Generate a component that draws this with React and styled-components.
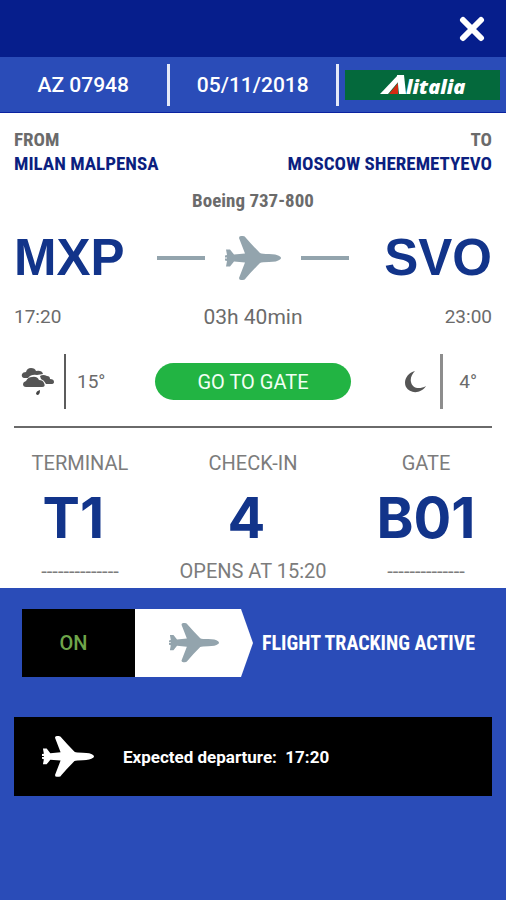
import React, { useState } from 'react'
import styled, { createGlobalStyle } from 'styled-components'

const GlobalStyle = createGlobalStyle`
  * {
    box-sizing: border-box;
  }
  body {
    margin: 0;
    background: #2a4cb8;
    font-family: Roboto, 'Liberation Sans', sans-serif;
    font-size: 20px;
    line-height: 24px;
    color: #6b6b6b;
  }
  button {
    font: inherit;
    border: 0;
    padding: 0;
    cursor: pointer;
  }
  svg {
    display: block;
    flex: none;
  }
`

const narrow = "'Roboto Condensed', 'Liberation Sans Narrow', Roboto, sans-serif"

const TopBar = styled.header`
  display: flex;
  justify-content: flex-end;
  align-items: center;
  height: 57px;
  padding: 0 21px;
  background: #061e8c;
`
const CloseButton = styled.button`
  background: none;
`
const InfoBar = styled.div`
  display: grid;
  grid-template-columns: 1fr 1fr 167px;
  align-items: center;
  height: 56px;
  border-bottom: 1px solid #0a22a0;
  background: #2a4cb8;
`
const InfoCell = styled.div`
  display: flex;
  align-items: center;
  justify-content: center;
  height: 42px;
  padding: 0 6px;
  border-right: ${({ $last }) => ($last ? '0' : '3px solid #e4e9f8')};
  color: #fff;
  font-size: 21px;
  font-weight: 500;
`
const AirlineBadge = styled.div`
  display: flex;
  justify-content: center;
  width: 100%;
  height: 30px;
  background: #04693c;
`
const Card = styled.main`
  padding: 15px 14px 5px;
  background: #fff;
`
const Airports = styled.div`
  display: flex;
  justify-content: space-between;
`
const Airport = styled.div`
  font-family: ${narrow};
  font-size: 19px;
  font-weight: 700;
  text-align: ${({ $end }) => ($end ? 'right' : 'left')};
`
const AirportName = styled.div`
  color: #0c1f80;
`
const Aircraft = styled.div`
  margin-top: 13px;
  font-family: ${narrow};
  font-size: 19px;
  font-weight: 700;
  text-align: center;
`
const SplitRow = styled.div`
  display: grid;
  grid-template-columns: 1fr auto 1fr;
  align-items: center;
  margin-top: ${({ $gap }) => $gap}px;
`
const Code = styled.div`
  font-family: 'Liberation Sans', sans-serif;
  font-size: 51px;
  font-weight: 700;
  line-height: 60px;
  color: #12348a;
  text-align: ${({ $end }) => ($end ? 'right' : 'left')};
`
const Route = styled.div`
  display: flex;
  align-items: center;
  gap: 20px;
`
const RouteLine = styled.span`
  width: 48px;
  height: 4px;
  background: #93a4ad;
`
const Time = styled.div`
  font-size: 19px;
  text-align: ${({ $end }) => ($end ? 'right' : 'left')};
`
const Duration = styled.div`
  font-size: 21px;
`
const Weather = styled.div`
  display: flex;
  align-items: center;
  justify-content: ${({ $end }) => ($end ? 'flex-end' : 'flex-start')};
  padding: ${({ $end }) => ($end ? '0 15px 0 0' : '0 0 0 7px')};
`
const WeatherTemp = styled.span`
  display: flex;
  align-items: center;
  height: 55px;
  margin-left: ${({ $end }) => ($end ? '14px' : '8px')};
  padding-left: ${({ $end }) => ($end ? '16px' : '11px')};
  border-left: ${({ $end }) => ($end ? '3px solid #8d8d8d' : '2px solid #5c5c5c')};
  font-size: 19px;
`
const GateButton = styled.button`
  width: 196px;
  height: 37px;
  border-radius: 19px;
  background: #22b443;
  color: #f2fff4;
`
const Rule = styled.hr`
  height: 2px;
  margin: 17px 0 23px;
  border: 0;
  background: #6a6a6a;
`
const Stats = styled.div`
  display: grid;
  grid-template-columns: 132px 1fr 132px;
  text-align: center;
`
const StatLabel = styled.div`
  color: #7c7c7c;
`
const StatValue = styled.div`
  margin: 13px 0 11px;
  font-family: Inter, 'Liberation Sans', sans-serif;
  font-size: 56px;
  font-weight: 700;
  line-height: 60px;
  color: #12348a;
`
const Tracking = styled.section`
  display: flex;
  align-items: center;
  gap: 9px;
  padding: 21px 22px 0;
`
const TrackSwitch = styled.button`
  display: flex;
  flex: none;
  width: 231px;
  height: 68px;
  background: none;
`
const SwitchState = styled.span`
  display: flex;
  align-items: center;
  justify-content: center;
  width: 113px;
  height: 100%;
  padding-right: 10px;
  background: #000;
  color: #6ea54a;
  font-weight: 500;
`
const SwitchHandle = styled.span`
  display: flex;
  align-items: center;
  flex: 1;
  height: 100%;
  padding-left: 34px;
  background: #fff;
  clip-path: polygon(0 0, 106px 0, 100% 50%, 106px 100%, 0 100%);
`
const TrackLabel = styled.span`
  font-family: ${narrow};
  font-weight: 700;
  color: #fff;
  white-space: nowrap;
`
const Notice = styled.section`
  display: flex;
  align-items: center;
  gap: 29px;
  height: 79px;
  margin: 40px 14px 0;
  padding: 0 28px;
  background: #000;
  color: #fff;
  font-size: 17px;
  font-weight: 700;
  white-space: pre;
`

const Plane = ({ width, color }) => (
  <svg width={width} viewBox='0 0 56 44' fill={color} aria-hidden='true'>
    <path d='M14 2Q14 0 16 0H18Q20 0 21 2Q27 9 35 17Q37 18 44 18Q52 18 55 20.500Q57 22 55 23.500Q52 26 44 26Q37 26 35 27Q27 35 21 42Q20 44 18 44H16Q14 44 14 42L20 26.500L9 25.500L5 30.500H1L2 25L0 24.500V22.500H2V21.500H0V19.500L2 19L1 13.500H5L9 18.500L20 17.500Z' />
  </svg>
)

const CloseIcon = () => (
  <svg width='26' height='26' viewBox='0 0 26 26' aria-hidden='true'>
    <path
      d='M4 4L22 22M22 4L4 22'
      stroke='#fff'
      strokeWidth='6'
      strokeLinecap='round'
    />
  </svg>
)

const CloudIcon = () => (
  <svg width='35' height='30' viewBox='0 0 35 30' aria-hidden='true'>
    <path
      d='M3 11Q0 10 1 7Q2 5 5 5Q6 1 10 1Q14 1 15 4Q21 3 22 7L16 8Q10 7 7 11Z'
      fill='#555'
    />
    <path
      d='M19 9Q22 7 26 9Q29 9 29 12Q33 12 33 15Q33 17 30 17H25Q23 13 20 12Z'
      fill='#555'
    />
    <path
      d='M5 20Q2 20 2 17Q2 15 5 14Q7 10 11 10Q16 9 18 13Q22 13 23 16Q25 20 21 20Z'
      fill='#555'
    />
    <path d='M19 23Q15 24 15 27Q17 29 18 27Q19 26 19 23Z' fill='#444' />
  </svg>
)

const MoonIcon = () => (
  <svg width='21' height='22' viewBox='0 0 21 22' aria-hidden='true'>
    <path d='M10 0C2 2 -2 10 1 16C5 23 16 23 21 15C14 19 7 17 6 11C5 7 7 3 10 0Z' fill='#555' />
  </svg>
)

const AirlineLogo = () => (
  <svg width='90' height='30' viewBox='0 0 90 30' role='img' aria-label='Alitalia'>
    <path d='M2 24L20 5H26L10 24Z' fill='#fff' />
    <path d='M11 24L20 13V24Z' fill='#d22a12' />
    <path d='M19 5H26L28 24H21Z' fill='#fff' />
    <text
      x='28'
      y='24'
      fill='#fff'
      fontFamily='Open Sans, sans-serif'
      fontSize='20'
      fontWeight='800'
      fontStyle='italic'
    >
      litalia
    </text>
  </svg>
)

const stats = [
  { label: 'TERMINAL', value: 'T1\u00a0', note: '--------------' },
  { label: 'CHECK-IN', value: '4\u00a0', note: 'OPENS AT 15:20' },
  { label: 'GATE', value: 'B01', note: '--------------' },
]

const App = () => {
  const [tracking, setTracking] = useState(true)

  return (
    <>
      <GlobalStyle />
      <TopBar>
        <CloseButton aria-label='Close'>
          <CloseIcon />
        </CloseButton>
      </TopBar>
      <InfoBar>
        <InfoCell>AZ 07948</InfoCell>
        <InfoCell>05/11/2018</InfoCell>
        <InfoCell $last>
          <AirlineBadge>
            <AirlineLogo />
          </AirlineBadge>
        </InfoCell>
      </InfoBar>

      <Card>
        <Airports>
          <Airport>
            FROM
            <AirportName>MILAN MALPENSA</AirportName>
          </Airport>
          <Airport $end>
            TO
            <AirportName>MOSCOW SHEREMETYEVO</AirportName>
          </Airport>
        </Airports>
        <Aircraft>Boeing 737-800</Aircraft>
        <SplitRow $gap={15}>
          <Code>MXP</Code>
          <Route>
            <RouteLine />
            <Plane width={56} color='#93a4ad' />
            <RouteLine />
          </Route>
          <Code $end>SVO</Code>
        </SplitRow>
        <SplitRow $gap={17}>
          <Time>17:20</Time>
          <Duration>03h 40min</Duration>
          <Time $end>23:00</Time>
        </SplitRow>
        <SplitRow $gap={25}>
          <Weather>
            <CloudIcon />
            <WeatherTemp>15°</WeatherTemp>
          </Weather>
          <GateButton>GO TO GATE</GateButton>
          <Weather $end>
            <MoonIcon />
            <WeatherTemp $end>4°</WeatherTemp>
          </Weather>
        </SplitRow>
        <Rule />
        <Stats>
          {stats.map((stat) => (
            <div key={stat.label}>
              <StatLabel>{stat.label}</StatLabel>
              <StatValue>{stat.value}</StatValue>
              <StatLabel>{stat.note}</StatLabel>
            </div>
          ))}
        </Stats>
      </Card>

      <Tracking>
        <TrackSwitch
          role='switch'
          aria-checked={tracking}
          aria-labelledby='track-label'
          onClick={() => setTracking(!tracking)}
        >
          <SwitchState>{tracking ? 'ON' : 'OFF'}</SwitchState>
          <SwitchHandle>
            <Plane width={50} color='#93a4ad' />
          </SwitchHandle>
        </TrackSwitch>
        <TrackLabel id='track-label'>FLIGHT TRACKING ACTIVE</TrackLabel>
      </Tracking>
      <Notice>
        <Plane width={52} color='#fff' />
        {'Expected departure:  17:20'}
      </Notice>
    </>
  )
}

export default App
